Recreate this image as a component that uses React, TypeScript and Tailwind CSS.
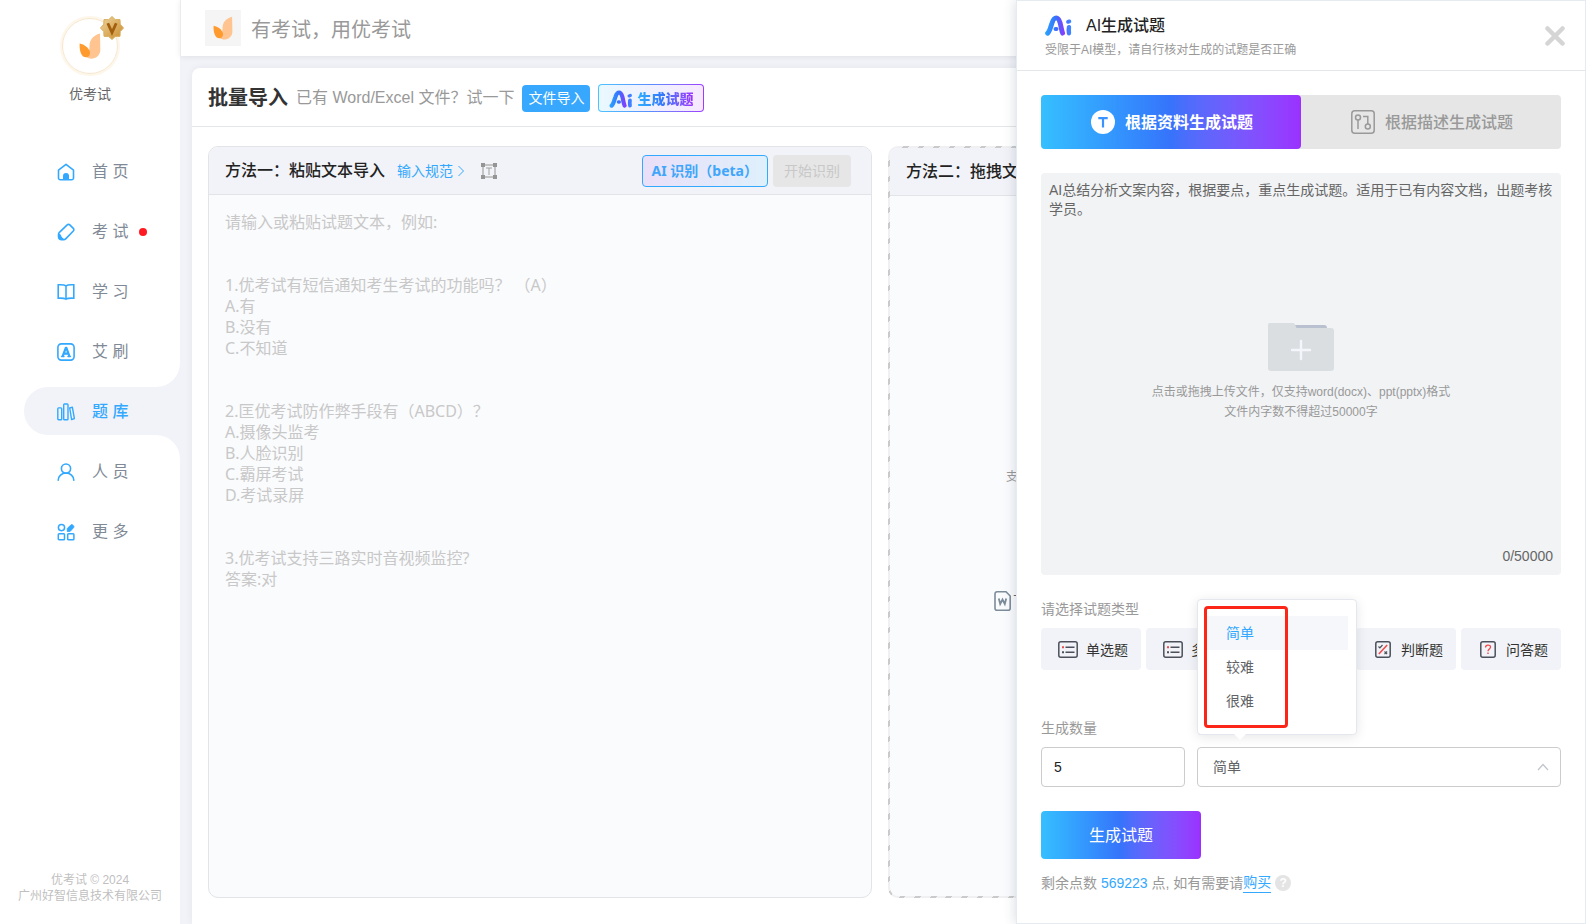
import React, { useState } from "react";

const BLUE = "#33a8ff";

function Flame({ className }: { className?: string }) {
  return (
    <svg className={className} viewBox="0 0 22 26" aria-hidden="true">
      <path d="M21 0.5C14 2.5 10.5 7 10.5 13c0 4.500-1 8-4 10.500C9 25.500 12 26 14 25.600c4.500-0.800 7.500-4.500 7.300-9Z" fill="#ffc48f" />
      <path d="M0.600 10.500C5.500 11.500 9.500 14.500 10.800 18.500c0.800 3-0.800 5.500-3.600 5.800C3 24.500 0.300 19.500 0.600 10.500Z" fill="#ff9a2e" />
    </svg>
  );
}

function Badge({ className }: { className?: string }) {
  return (
    <svg className={className} viewBox="0 0 24 24" aria-hidden="true">
      <defs>
        <linearGradient id="gold" x1="0" y1="0" x2="1" y2="1">
          <stop offset="0" stopColor="#f0d6a0" />
          <stop offset="1" stopColor="#c88a2a" />
        </linearGradient>
      </defs>
      <path d="M12 .5l3.300 3.200 4.700-.1.200 4.600L23.500 12l-3.300 3.600-.2 4.700-4.700.1L12 23.500l-3.300-3.100-4.700-.1-.2-4.700L.5 12l3.300-3.800.2-4.600 4.700.1Z" fill="url(#gold)" stroke="#d9ad5c" />
      <path d="M7.800 7.200l4.200 9.400 4.200-9.400" fill="none" stroke="#a35f10" strokeWidth="2.800" />
    </svg>
  );
}

function AiLogo({ id, className }: { id: string; className?: string }) {
  return (
    <svg className={className} viewBox="0 0 27 21" aria-hidden="true">
      <defs>
        <linearGradient id={id} x1="0" y1="0" x2="27" y2="0" gradientUnits="userSpaceOnUse">
          <stop offset="0" stopColor="#2aa5ff" />
          <stop offset="0.400" stopColor="#3673fb" />
          <stop offset="0.650" stopColor="#7a44ff" />
          <stop offset="0.760" stopColor="#8a3cff" />
          <stop offset="0.800" stopColor="#4a74ff" />
          <stop offset="1" stopColor="#3a8cff" />
        </linearGradient>
      </defs>
      <g fill="none" stroke={`url(#${id})`} strokeLinecap="round" strokeLinejoin="round">
        <path d="M2.600 18.200C4.800 16.500 5.600 12 7 8 8.200 4.300 9.500 2.900 11.200 2.900c1.900 0 3 1.900 3.900 5 1 3.700 1.400 7.600 2.500 10.200" strokeWidth="4.900" />
        <path d="M10.600 14h.8" strokeWidth="4.200" />
        <path d="M24 12.200c-.4 2-.3 4 0 6" strokeWidth="4.400" />
        <path d="M23 6.900l1.400-.5" strokeWidth="3.800" />
      </g>
    </svg>
  );
}

function NavIcon({ name }: { name: string }) {
  const s = { fill: "none", stroke: BLUE, strokeWidth: 1.6, strokeLinejoin: "round" as const, strokeLinecap: "round" as const };
  return (
    <svg className="size-[18px] shrink-0" viewBox="0 0 18 18" aria-hidden="true">
      {name === "home" && (
        <>
          <path {...s} d="M1.500 7.200 9 1.300l7.500 5.900v7.800a1.800 1.800 0 0 1-1.800 1.800H3.300A1.800 1.800 0 0 1 1.500 15Z" />
          <path d="M6 17v-4a3 3 0 0 1 6 0v4Z" fill={BLUE} />
        </>
      )}
      {name === "exam" && (
        <>
          <path {...s} d="M10.200 1.900a1.800 1.800 0 0 1 2.600 0l3.500 3.500a1.800 1.800 0 0 1 0 2.600l-7.600 7.900a3 3 0 0 1-2.100.9H4.600a3 3 0 0 1-3.100-3V11.500a3 3 0 0 1 .9-2.100Z" />
          <path d="M1.500 10.500c2 .3 2.500 1.500 3 3 .5 1.300 1.700 2 3.500 2.800l-1 .7H4a2.500 2.500 0 0 1-2.500-2.500Z" fill={BLUE} />
        </>
      )}
      {name === "study" && (
        <path {...s} strokeLinejoin="miter" d="M9 2.800C7.500 1.700 4.500 1.600 1.200 1.800v13.400c3.300-.2 6.300 0 7.800 1 1.500-1 4.500-1.200 7.800-1V1.800C13.500 1.600 10.500 1.700 9 2.800v13.400" />
      )}
      {name === "brush" && (
        <>
          <rect {...s} x="0.900" y="0.900" width="16.200" height="16.200" rx="3.500" />
          <path {...s} strokeWidth="2.200" strokeLinecap="butt" d="M5.600 13.500 8.800 4.800h.6l3.100 8.700M6.800 10.600h4.600" />
          <path {...s} strokeWidth="1.300" d="M4.600 13.500h2.400M10.900 13.500h2.600" />
        </>
      )}
      {name === "bank" && (
        <>
          <rect {...s} strokeWidth="1.400" x="0.800" y="4.900" width="3.900" height="11.800" rx="0.800" />
          <rect {...s} strokeWidth="1.400" x="6.700" y="1" width="4.300" height="15.700" rx="0.800" />
          <path {...s} strokeWidth="1.400" d="m12.700 5 2.700-.7 2 11.300-2.800.9Z" />
        </>
      )}
      {name === "people" && (
        <>
          <circle {...s} cx="9" cy="5.600" r="4.600" />
          <path {...s} d="M1.200 17.200a7.800 7.200 0 0 1 15.600 0" />
        </>
      )}
      {name === "more" && (
        <>
          <circle {...s} strokeWidth="1.500" cx="4.500" cy="4.600" r="3.100" />
          <rect {...s} strokeWidth="1.500" x="1.300" y="10.700" width="6.200" height="6" rx="0.800" />
          <rect {...s} strokeWidth="1.500" x="10.700" y="10.700" width="6.200" height="6" rx="0.800" />
          <path d="m10.300 8.500 0-3 3.600-3.600c1-1 3.700 1 2.800 2.600L13.300 8.200Z" fill={BLUE} stroke={BLUE} strokeLinejoin="round" />
        </>
      )}
    </svg>
  );
}

const NAV = [
  { id: "home", label: "首 页" },
  { id: "exam", label: "考 试", dot: true },
  { id: "study", label: "学 习" },
  { id: "brush", label: "艾 刷" },
  { id: "bank", label: "题 库", active: true },
  { id: "people", label: "人 员" },
  { id: "more", label: "更 多" },
];

function Sidebar() {
  return (
    <aside className="flex w-[180px] shrink-0 flex-col bg-white">
      <div className="flex flex-col items-center pt-4">
        <div className="relative flex size-[60px] items-center justify-center rounded-full border-2 border-[#fdf6ea] bg-white">
          <span className="flex size-full items-center justify-center rounded-full border border-[#f7e6cc]">
            <Flame className="h-[26px] w-[22px]" />
          </span>
          <Badge className="absolute -top-0.5 -right-1.5 size-6" />
        </div>
        <p className="mt-2 text-sm leading-5 text-[#666]">优考试</p>
      </div>
      <nav className="mt-[43px] flex flex-col gap-3">
        {NAV.map((n) =>
          n.active ? (
            <a key={n.id} href={`#${n.id}`} aria-current="page" className="relative ml-6 flex h-12 items-center gap-[17px] rounded-l-full bg-[#f2f3f8] pt-0.5 pl-[33px] font-medium text-[#33a8ff]">
              <span className="absolute right-0 -top-6 size-6 bg-[#f2f3f8]">
                <span className="block size-full rounded-br-[24px] bg-white" />
              </span>
              <span className="absolute right-0 -bottom-6 size-6 bg-[#f2f3f8]">
                <span className="block size-full rounded-tr-[24px] bg-white" />
              </span>
              <NavIcon name={n.id} />
              {n.label}
            </a>
          ) : (
            <a key={n.id} href={`#${n.id}`} className="ml-6 flex h-12 items-center gap-[17px] pt-0.5 pl-[33px] text-[#7f8a96]">
              <NavIcon name={n.id} />
              {n.label}
              {n.dot && <span className="-ml-1.5 size-2 rounded-full bg-[#ff1a22]" />}
            </a>
          ),
        )}
      </nav>
      <footer className="mt-auto pb-5 text-center text-xs leading-4 text-[#bfbfbf]">
        <p>优考试 © 2024</p>
        <p>广州好智信息技术有限公司</p>
      </footer>
    </aside>
  );
}

const SAMPLE = `请输入或粘贴试题文本，例如:


1.优考试有短信通知考生考试的功能吗？ （A）
A.有
B.没有
C.不知道


2.匡优考试防作弊手段有（ABCD）？
A.摄像头监考
B.人脸识别
C.霸屏考试
D.考试录屏


3.优考试支持三路实时音视频监控?
答案:对`;

function ImportPage() {
  return (
    <div className="flex min-w-0 flex-1 flex-col bg-[#f2f3f8]">
      <header className="flex h-14 items-center gap-2.5 border-l border-[#e9ebf1] bg-white pl-6 shadow-[0_1px_6px_rgba(0,0,0,0.08)]">
        <span className="flex size-9 items-center justify-center bg-[#f5f5f5]">
          <Flame className="h-6 w-5" />
        </span>
        <p className="pt-[3px] text-xl text-[#999]">有考试，用优考试</p>
      </header>
      <main className="mt-3 mr-4 ml-3 flex flex-1 flex-col rounded-t-lg bg-white shadow-[0_0_8px_rgba(0,0,0,0.06)]">
        <div className="flex h-[59px] items-center border-b border-[#e5e6e8] pt-0.5 pl-4">
          <h1 className="text-xl font-bold text-[#333]">批量导入</h1>
          <p className="ml-2 text-base text-[#999]">已有 Word/Excel 文件？试一下</p>
          <button className="ml-2 h-[27px] rounded bg-[#38a8ff] px-1.5 text-sm whitespace-nowrap text-white">文件导入</button>
          <button className="ml-2 h-7 rounded bg-linear-to-r from-[#4cc4ff] via-[#5c8cff] to-[#9b3cff] p-px">
            <span className="flex h-full items-center gap-1 rounded-[3px] bg-linear-to-r from-[#e9f8ff] to-[#f6e9ff] px-2.5 pt-px">
              <AiLogo id="ai-small" className="h-[18px] w-6" />
              <span className="bg-linear-to-r from-[#2fb0ff] via-[#3673fb] to-[#9b30ff] bg-clip-text text-sm font-black whitespace-nowrap text-transparent">生成试题</span>
            </span>
          </button>
        </div>
        <div className="flex flex-1 gap-4 px-4 pt-[19px] pb-[26px]">
          <section className="flex min-w-0 flex-1 flex-col overflow-hidden rounded-[10px] border border-[#e3e4e7] bg-[#fafbfd]">
            <div className="flex h-12 shrink-0 items-center border-b border-[#e3e4e7] bg-[#f2f3f8] pr-5 pl-4">
              <h2 className="font-medium text-[#222]">方法一：粘贴文本导入</h2>
              <a href="#format" className="ml-3 flex items-center gap-1 text-sm text-[#33a8ff]">
                输入规范
                <svg className="h-3 w-2" viewBox="0 0 8 12" fill="none" stroke="currentColor" aria-hidden="true">
                  <path d="m1.500 1 5 5-5 5" />
                </svg>
              </a>
              <svg className="ml-4 size-4" viewBox="0 0 16 16" aria-hidden="true">
                <rect x="2" y="2" width="12" height="12" fill="none" stroke="#b5b5b5" strokeWidth="1.500" />
                <path d="M5 5h6M8 5v7" fill="none" stroke="#a0a0a0" />
                <path d="M0 0h4v4H0zM12 0h4v4h-4zM0 12h4v4H0zM12 12h4v4h-4z" fill="#959595" />
              </svg>
              <button className="ml-auto h-8 rounded border border-[#33a8ff] bg-linear-to-r from-[#eadff8] to-[#def0fb] px-[9px] font-['Noto_Sans','Noto_Sans_CJK_SC',sans-serif] text-sm font-bold whitespace-nowrap text-[#3fa6fb]">
                AI 识别（beta）
              </button>
              <button disabled className="ml-[5px] h-8 rounded bg-[#e6e6e6] px-[11px] text-sm whitespace-nowrap text-[#c8c8c8]">开始识别</button>
            </div>
            <textarea
              aria-label="试题文本"
              placeholder={SAMPLE}
              className="w-full flex-1 resize-none bg-transparent px-4 py-[17px] font-['Noto_Sans','Noto_Sans_CJK_SC',sans-serif] text-base leading-[21px] outline-none placeholder:text-[#c8c8c8]"
            />
          </section>
          <div className="flex min-w-0 flex-1 rounded-[10px] bg-[repeating-linear-gradient(135deg,#cacaca_0_4px,#f0f0f2_4px_11px)] p-0.5">
            <section className="flex min-w-0 flex-1 flex-col overflow-hidden rounded-lg bg-[#fafbfd]">
              <div className="flex h-12 shrink-0 items-center border-b border-[#e3e4e7] bg-[#f2f3f8] px-4">
                <h2 className="font-medium text-[#222]">方法二：拖拽文件导入</h2>
              </div>
              <div className="flex flex-1 flex-col justify-center gap-[106px] pb-9 pl-[116px] text-xs leading-4 text-[#999]">
                <p className="mt-6">支持Word、Excel文件</p>
                <a href="#template" className="-ml-3 flex items-center gap-0.5 text-sm leading-5 text-[#666]">
                  <svg className="h-5 w-[17px]" viewBox="0 0 17 20" fill="none" stroke="#7c8c9a" strokeWidth="1.600" aria-hidden="true">
                    <path d="M3 .8h9L16.200 5v12.200a2 2 0 0 1-2 2H3a2 2 0 0 1-2-2V2.800a2 2 0 0 1 2-2Z" />
                    <path d="m4.800 7.500 1.400 5.500 2.300-4.500 2.300 4.500 1.400-5.500" strokeWidth="1.800" />
                  </svg>
                  下载
                </a>
              </div>
            </section>
          </div>
        </div>
      </main>
    </div>
  );
}

function TypeIcon({ kind }: { kind: string }) {
  if (kind === "list") {
    return (
      <svg className="h-[17px] w-5 shrink-0" viewBox="0 0 20 17" fill="none" aria-hidden="true">
        <rect x="0.800" y="0.800" width="18.400" height="15.400" rx="2" stroke="#4b505a" strokeWidth="1.500" />
        <path d="M7.500 6.200h9M7.500 11.200h9" stroke="#4b505a" strokeWidth="1.400" />
        <path d="M4 5.200h2v2H4z" fill="#f04a4a" />
        <path d="M4 10.200h2v2H4z" fill="#4b505a" />
      </svg>
    );
  }
  return (
    <svg className="h-[17px] w-4 shrink-0" viewBox="0 0 16 17" fill="none" aria-hidden="true">
      <rect x="0.800" y="0.800" width="14.400" height="15.400" rx="2" stroke="#4b505a" strokeWidth="1.500" />
      {kind === "judge" ? (
        <>
          <path d="M12.200 4 3.800 13" stroke="#f04a4a" strokeWidth="1.500" />
          <path d="m3.500 5.500 1.400 1.400L7.500 4M9.500 10.500l2.600 2.600M12.100 10.500l-2.600 2.600" stroke="#4b505a" strokeWidth="1.200" />
        </>
      ) : (
        <>
          <path d="M5.500 6.500C5.500 3.200 10.700 3.300 10.500 6.300 10.400 8 8 8.100 8 10.300" stroke="#f04a4a" strokeWidth="1.300" />
          <path d="M7.300 11.600h1.400v1.500H7.300z" fill="#f04a4a" />
        </>
      )}
    </svg>
  );
}

const TYPES = [
  { label: "单选题", kind: "list" },
  { label: "多选题", kind: "list" },
  { label: "填空题", kind: "list" },
  { label: "判断题", kind: "judge" },
  { label: "问答题", kind: "ask" },
];
const LEVELS = ["简单", "较难", "很难"];

function Drawer() {
  const [level, setLevel] = useState("简单");
  const [count, setCount] = useState("5");
  return (
    <aside className="absolute inset-y-0 right-0 flex w-[570px] flex-col border border-[#e6ebf1] bg-white shadow-[0_0_12px_rgba(40,60,90,0.2)]">
      <header className="flex h-[70px] shrink-0 items-center justify-between border-b border-[#e5e6e8] pr-5 pl-7">
        <div className="pt-0.5">
          <div className="flex items-center gap-3.5">
            <AiLogo id="ai-large" className="h-[21px] w-[27px]" />
            <h2 className="text-base leading-6 font-medium text-[#222]">AI生成试题</h2>
          </div>
          <p className="mt-0.5 text-xs leading-5 text-[#999]">受限于AI模型，请自行核对生成的试题是否正确</p>
        </div>
        <button aria-label="关闭">
          <svg className="size-5" viewBox="0 0 20 20" fill="none" stroke="#d5d5d5" strokeWidth="4.500" strokeLinecap="round" aria-hidden="true">
            <path d="m2.500 2.500 15 15M17.500 2.500l-15 15" />
          </svg>
        </button>
      </header>
      <div className="flex flex-1 flex-col px-6 pt-6 pb-[30px]">
        <div className="flex h-[54px] shrink-0 rounded bg-[#e6e6e6]" role="tablist">
          <button role="tab" aria-selected="true" className="flex flex-1 items-center justify-center gap-2.5 rounded bg-linear-to-r from-[#36bfff] via-[#3673fb] to-[#9b30ff] pl-0.5 font-bold text-white">
            <svg className="size-6" viewBox="0 0 24 24" aria-hidden="true">
              <circle cx="12" cy="12" r="12" fill="#fff" />
              <path d="M7.300 8.100h9.400M12 8.100v9.400" stroke="#3a93ff" strokeWidth="2.200" />
            </svg>
            <span className="pt-0.5">根据资料生成试题</span>
          </button>
          <button role="tab" aria-selected="false" className="flex flex-1 items-center justify-center gap-2.5 pl-0.5 font-medium text-[#999]">
            <svg className="size-6" viewBox="0 0 24 24" fill="none" stroke="#999" strokeWidth="1.500" aria-hidden="true">
              <rect x="0.800" y="0.800" width="22.400" height="22.400" rx="3" />
              <circle cx="7" cy="7.500" r="2.500" />
              <path d="M7 10v9M12 6.500h4.800v7.500" />
              <circle cx="16.800" cy="16.500" r="2.500" />
            </svg>
            <span className="pt-0.5">根据描述生成试题</span>
          </button>
        </div>
        <div className="mt-6 flex min-h-60 flex-1 flex-col rounded bg-[#f1f3f5] p-2 text-sm text-[#666]">
          <p className="leading-[19px]">AI总结分析文案内容，根据要点，重点生成试题。适用于已有内容文档，出题考核学员。</p>
          <button className="flex flex-1 flex-col items-center justify-center pb-5 text-xs leading-5 text-[#999]">
            <svg className="mb-[11px] h-12 w-[66px]" viewBox="0 0 66 48" aria-hidden="true">
              <path d="M24 2h32a3 3 0 0 1 3 3v4H24Z" fill="#b9c0d0" />
              <path d="M0 1.500A1.500 1.500 0 0 1 1.500 0H25a2 2 0 0 1 1.800 1.200L28.500 5H63a3 3 0 0 1 3 3v37a3 3 0 0 1-3 3H3a3 3 0 0 1-3-3Z" fill="#dadee1" />
              <path d="M33 18v18M24 27h18" stroke="#f5f6fb" strokeWidth="2.400" strokeLinecap="round" />
            </svg>
            <span>点击或拖拽上传文件，仅支持word(docx)、ppt(pptx)格式</span>
            <span>文件内字数不得超过50000字</span>
          </button>
          <p className="text-right leading-[22px]">0/50000</p>
        </div>

        <p id="types" className="mt-6 mb-[9px] text-sm leading-5 text-[#999]">请选择试题类型</p>
        <div className="flex gap-[5px]" role="group" aria-labelledby="types">
          {TYPES.map((t) => (
            <button key={t.label} className="flex h-[42px] flex-1 items-center justify-center gap-2 rounded bg-[#f2f3f8] pt-px pl-1 text-sm whitespace-nowrap text-[#333]">
              <span className="flex w-5 justify-center">
                <TypeIcon kind={t.kind} />
              </span>
              {t.label}
            </button>
          ))}
        </div>

        <div className="mt-12 flex gap-3">
          <div className="w-36 shrink-0">
            <label htmlFor="count" className="mb-[9px] block text-sm leading-5 text-[#999]">生成数量</label>
            <input id="count" value={count} onChange={(e) => setCount(e.target.value)} className="h-10 w-full rounded border border-[#ccc] px-3 text-sm text-[#222] outline-none" />
          </div>
          <div className="flex-1">
            <label htmlFor="level" className="mb-[9px] block text-sm leading-5 text-[#999]">试题难度</label>
            <div className="relative">
              <select id="level" value={level} onChange={(e) => setLevel(e.target.value)} className="h-10 w-full appearance-none rounded border border-[#ccc] bg-white px-[15px] text-sm text-[#606266] outline-none">
                {LEVELS.map((l) => (
                  <option key={l}>{l}</option>
                ))}
              </select>
              <svg className="pointer-events-none absolute top-4 right-3 h-2 w-3" viewBox="0 0 12 8" fill="none" stroke="#c0c4cc" strokeWidth="1.200" aria-hidden="true">
                <path d="m1 7 5-5.500L11 7" />
              </svg>
              <div className="absolute bottom-full left-0 mb-3 w-40 rounded border border-[#e4e7ed] bg-white py-4 pr-2 pl-2 shadow-[0_2px_12px_rgba(0,0,0,0.1)]">
                <ul role="listbox" aria-label="试题难度">
                  {LEVELS.map((l) => (
                    <li
                      key={l}
                      role="option"
                      aria-selected={l === level}
                      onClick={() => setLevel(l)}
                      className={l === level ? "bg-[#f5f7fa] pl-5 text-sm leading-[34px] text-[#33a8ff]" : "pl-5 text-sm leading-[34px] text-[#606266]"}
                    >
                      {l}
                    </li>
                  ))}
                </ul>
                <span className="absolute inset-y-1.5 left-1.5 w-[84px] rounded border-3 border-[#fb2518]" />
                <svg className="absolute top-full left-9 h-1.5 w-3" viewBox="0 0 12 6" aria-hidden="true">
                  <path d="M0 0h12L6 6Z" fill="#fff" />
                </svg>
              </div>
            </div>
          </div>
        </div>

        <button className="mt-6 h-12 w-40 shrink-0 rounded bg-linear-to-r from-[#36bfff] via-[#3673fb] to-[#9b30ff] pt-0.5 text-base text-white">生成试题</button>
        <p className="mt-[14px] flex items-center text-sm leading-5 text-[#999]">
          <span>
            剩余点数 <span className="text-[#33a8ff]">569223</span> 点, 如有需要请
          </span>
          <a href="#buy" className="border-b border-[#33a8ff] leading-[19px] text-[#33a8ff]">购买</a>
          <span className="ml-1 flex size-4 items-center justify-center rounded-full bg-[#e4e4e4] text-xs font-bold text-white">?</span>
        </p>
      </div>
    </aside>
  );
}

export default function App() {
  return (
    <div className="relative flex min-h-screen overflow-hidden bg-white font-['Liberation_Sans','Noto_Sans_CJK_SC',sans-serif]">
      <Sidebar />
      <ImportPage />
      <Drawer />
    </div>
  );
}
